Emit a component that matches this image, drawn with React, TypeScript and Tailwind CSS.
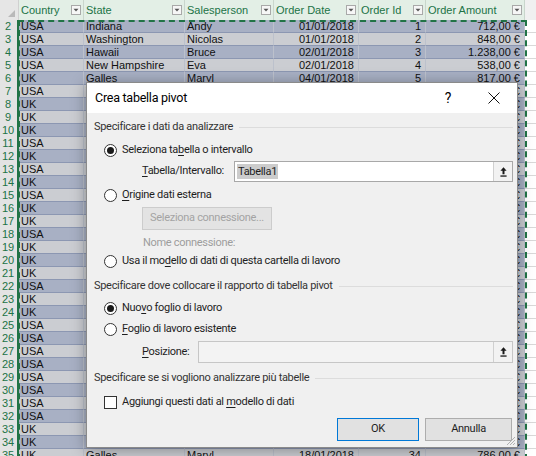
import React from "react";

type Row = [string, string, string, string, string, string];

const known: Row[] = [
  ["USA", "Indiana", "Andy", "01/01/2018", "1", "712,00 €"],
  ["USA", "Washington", "Nicolas", "01/01/2018", "2", "848,00 €"],
  ["USA", "Hawaii", "Bruce", "02/01/2018", "3", "1.238,00 €"],
  ["USA", "New Hampshire", "Eva", "02/01/2018", "4", "538,00 €"],
  ["UK", "Galles", "Maryl", "04/01/2018", "5", "817,00 €"],
];

const countries = [
  "USA", "UK", "UK", "UK", "USA", "UK", "USA", "UK", "USA", "UK", "UK", "USA", "UK", "UK",
  "UK", "USA", "UK", "UK", "USA", "USA", "USA", "USA", "USA", "USA", "USA", "USA", "UK", "UK",
];
const usStates = ["Texas", "Ohio", "Nevada", "Florida", "Oregon", "Utah", "Iowa", "Kansas"];
const ukStates = ["Inghilterra", "Scozia", "Galles", "Irlanda del Nord"];
const people = ["Andy", "Nicolas", "Bruce", "Eva", "Maryl", "John", "Laura"];
const amounts = ["455,00 €", "912,00 €", "1.020,00 €", "367,00 €", "689,00 €", "744,00 €", "520,00 €"];

const rows: Row[] = [
  ...known,
  ...countries.map((c, i): Row => [
    c,
    c === "USA" ? usStates[i % usStates.length] : ukStates[i % ukStates.length],
    people[i % people.length],
    `${String(4 + Math.floor(i / 2)).padStart(2, "0")}/01/2018`,
    String(6 + i),
    amounts[i % amounts.length],
  ]),
  ["UK", "Galles", "Maryl", "18/01/2018", "34", "786,00 €"],
];

const headers = ["Country", "State", "Salesperson", "Order Date", "Order Id", "Order Amount"];
const widths = ["w-[65px]", "w-[101px]", "w-[89px]", "w-[85px]", "w-[67px]", "w-[99px]"];

function FilterBtn() {
  return (
    <div className="w-[10px] h-[10px] border border-[#a9a9a9] bg-[#f6f6f6] flex items-center justify-center shrink-0">
      <svg width="6" height="4" viewBox="0 0 6 4">
        <path d="M0.5 0.8 H5.5 L3 3.4 Z" fill="#555" />
      </svg>
    </div>
  );
}

function UploadIcon() {
  return (
    <svg width="7" height="10" viewBox="0 0 7 10">
      <path d="M3.5 0.3 L0.4 3.8 H2.5 V7.2 H4.5 V3.8 H6.6 Z" fill="#1a1a1a" />
      <rect x="0.4" y="8.4" width="6.2" height="1.3" fill="#1a1a1a" />
    </svg>
  );
}

function Radio({ checked }: { checked?: boolean }) {
  return (
    <div className="w-[13px] h-[13px] rounded-full border border-[#333333] bg-white flex items-center justify-center shrink-0">
      {checked && <div className="w-[7px] h-[7px] rounded-full bg-[#1a1a1a]" />}
    </div>
  );
}

function SectionHead({ children }: { children: React.ReactNode }) {
  return (
    <div className="h-[20px] flex items-center">
      <span className="text-[#333]">{children}</span>
      <div className="flex-1 h-px bg-[#dcdcdc] ml-[6px]" />
    </div>
  );
}

export default function App() {
  return (
    <div
      className="relative w-[536px] h-[456px] overflow-hidden bg-white"
      style={{ fontFamily: '"Liberation Sans", Arial, sans-serif' }}
    >
      {/* Column header bar */}
      <div className="flex h-[20px] text-[11px] text-[#217346]">
        <div className="w-[19px] bg-[#e6e6e6] border-r border-[#d0d0d0] relative">
          <svg className="absolute right-[3px] bottom-[3px]" width="7" height="7" viewBox="0 0 7 7">
            <path d="M7 0 V7 H0 Z" fill="#b9b9b9" />
          </svg>
        </div>
        {headers.map((h, i) => (
          <div
            key={h}
            className={`${widths[i]} bg-[#e3efe6] border-r border-[#c9d6cc] flex items-center justify-between pl-[2px] pr-[2px]`}
          >
            <span className="whitespace-nowrap">{h}</span>
            <FilterBtn />
          </div>
        ))}
        <div className="flex-1 bg-[#f0f0f0]" />
      </div>

      {/* Data rows */}
      <div className="flex flex-col">
        {rows.map((r, idx) => {
          const dark = idx % 2 === 0;
          const bg = dark ? "bg-[#a8b0c4]" : "bg-[#cbcdd2]";
          return (
            <div key={idx} className="flex h-[13px] text-[11px] leading-[13px] text-[#111]">
              <div className="w-[19px] bg-[#e3e3e3] border-r-2 border-[#217346] text-[#217346] text-center pr-[1px]">
                {idx + 2}
              </div>
              {r.map((v, i) => (
                <div
                  key={i}
                  className={`${widths[i]} ${bg} border-b border-[#8c97b2] border-r border-r-[#bcc1cc] overflow-hidden whitespace-nowrap ${
                    i >= 3 ? "text-right pr-[4px]" : "pl-[2px]"
                  }`}
                >
                  {v}
                </div>
              ))}
              <div className="flex-1 bg-white border-b border-[#d9d9d9]" />
            </div>
          );
        })}
      </div>

      {/* Marching ants selection border */}
      <div className="absolute left-[18px] top-[20px] w-[509px] h-[450px] border-2 border-b-0 border-dashed border-[#217346] pointer-events-none" />

      {/* Dialog */}
      <div
        className="absolute left-[86px] top-[82px] w-[432px] h-[366px] border border-[#8a8a8a] bg-[#f0f0f0] shadow-[0_2px_14px_rgba(0,0,0,0.35)] flex flex-col text-[11px] tracking-[-0.3px] text-[#1e1e1e]"
        style={{ fontFamily: 'Roboto, "Noto Sans", sans-serif' }}
      >
        <div className="h-[30px] bg-white flex items-center shrink-0">
          <span className="pl-[8px] text-[12.5px] tracking-[-0.25px] text-black">Crea tabella pivot</span>
          <div className="ml-auto w-[46px] h-full flex items-center justify-center text-[14px] text-black">?</div>
          <div className="w-[46px] h-full flex items-center justify-center">
            <svg width="12" height="12" viewBox="0 0 12 12">
              <path d="M0.5 0.5 L11.5 11.5 M11.5 0.5 L0.5 11.5" stroke="#111" strokeWidth="1" />
            </svg>
          </div>
        </div>

        <div className="relative flex-1 flex flex-col pl-[7px] pr-[4px] pt-[4px]">
          <SectionHead>Specificare i dati da analizzare</SectionHead>

          <div className="mt-[2px] h-[22px] flex items-center pl-[10px] gap-[5px]">
            <Radio checked />
            <span>
              Seleziona ta<u className="underline-offset-2">b</u>ella o intervallo
            </span>
          </div>

          <div className="h-[21px] flex items-center pl-[48px]">
            <span className="w-[92px]">
              <u className="underline-offset-2">T</u>abella/Intervallo:
            </span>
            <div className="flex-1 h-full bg-white border border-[#a8a8a8] flex items-center">
              <span className="ml-[2px] px-[1px] bg-[#cccccc] leading-[15px]">Tabella1</span>
              <div className="ml-auto w-[19px] h-full border-l border-[#d0d0d0] bg-[#f2f2f2] flex items-center justify-center">
                <UploadIcon />
              </div>
            </div>
          </div>

          <div className="mt-[2px] h-[22px] flex items-center pl-[10px] gap-[5px]">
            <Radio />
            <span>
              <u className="underline-offset-2">O</u>rigine dati esterna
            </span>
          </div>

          <div className="mt-[1px] h-[23px] pl-[48px] flex">
            <div className="w-[130px] h-full bg-[#e3e3e3] border border-[#cccccc] text-[#a3a3a3] flex items-center justify-center">
              Seleziona connessione...
            </div>
          </div>

          <div className="mt-[3px] h-[20px] flex items-center pl-[49px] text-[#9d9d9d]">Nome connessione:</div>

          <div className="h-[16px] flex items-center pl-[10px] gap-[5px]">
            <Radio />
            <span>
              Usa il mo<u className="underline-offset-2">d</u>ello di dati di questa cartella di lavoro
            </span>
          </div>

          <div className="mt-[7px]">
            <SectionHead>Specificare dove collocare il rapporto di tabella pivot</SectionHead>
          </div>

          <div className="mt-[1px] h-[22px] flex items-center pl-[10px] gap-[5px]">
            <Radio checked />
            <span>
              Nuo<u className="underline-offset-2">v</u>o foglio di lavoro
            </span>
          </div>

          <div className="h-[20px] flex items-center pl-[10px] gap-[5px]">
            <Radio />
            <span>
              <u className="underline-offset-2">F</u>oglio di lavoro esistente
            </span>
          </div>

          <div className="mt-[2px] h-[22px] flex items-center pl-[48px]">
            <span className="w-[56px]">
              <u className="underline-offset-2">P</u>osizione:
            </span>
            <div className="flex-1 h-full bg-[#f3f3f3] border border-[#c6c6c6] flex items-center">
              <div className="ml-auto w-[19px] h-full border-l border-[#d0d0d0] bg-[#f2f2f2] flex items-center justify-center">
                <UploadIcon />
              </div>
            </div>
          </div>

          <div className="mt-[5px]">
            <SectionHead>Specificare se si vogliono analizzare più tabelle</SectionHead>
          </div>

          <div className="mt-[3px] h-[22px] flex items-center pl-[10px] gap-[5px]">
            <div className="w-[13px] h-[13px] border border-[#333333] bg-white shrink-0" />
            <span>
              Aggiungi questi dati al <u className="underline-offset-2">m</u>odello di dati
            </span>
          </div>

          <div className="mt-[5px] h-[23px] flex justify-end gap-[6px] pr-[1px]">
            <div className="w-[82px] h-full bg-[#e1e1e1] border border-[#0078d7] flex items-center justify-center">
              OK
            </div>
            <div className="w-[87px] h-full bg-[#e1e1e1] border border-[#adadad] flex items-center justify-center">
              Annulla
            </div>
          </div>

          <svg className="absolute right-[1px] bottom-[1px]" width="12" height="12" viewBox="0 0 12 12">
            <path d="M11 3 L3 11 M11 6 L6 11 M11 9 L9 11" stroke="#b0b0b0" strokeWidth="1" />
          </svg>
        </div>
      </div>
    </div>
  );
}
